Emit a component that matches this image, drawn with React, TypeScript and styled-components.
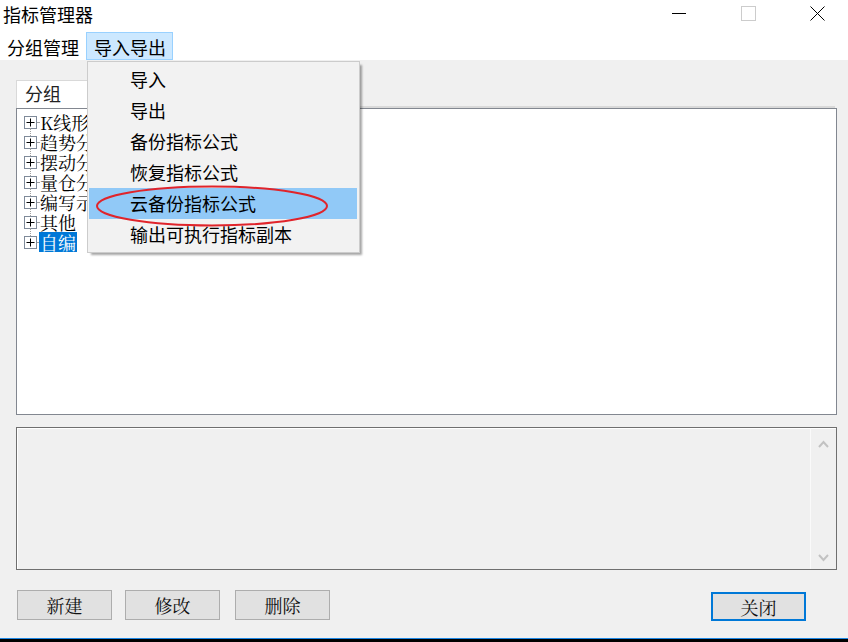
import React from "react";
import styled, { createGlobalStyle } from "styled-components";

const Global = createGlobalStyle`
  html, body { margin: 0; padding: 0; background: #f0f0f0; }
  body { font-family: "Noto Sans CJK SC", "Noto Sans", sans-serif; }
  * { box-sizing: border-box; }
`;

const SANS = `"Noto Sans CJK SC", "Noto Sans", sans-serif`;
const SERIF = `"Noto Serif CJK SC", "Liberation Serif", "Noto Sans CJK SC", serif`;

const Window = styled.div`
  position: relative;
  width: 848px;
  height: 642px;
  display: flex;
  flex-direction: column;
  overflow: hidden;
  background: #f0f0f0;
`;

const TitleBar = styled.div`
  height: 30px;
  background: #fff;
  display: flex;
  align-items: flex-start;
  justify-content: space-between;
`;

const Title = styled.div`
  font-family: ${SANS};
  font-size: 18px;
  line-height: 28px;
  padding-left: 3px;
  color: #000;
`;

const Captions = styled.div`
  display: flex;
  align-items: flex-start;
  gap: 54px;
  padding: 6px 23px 0 0;
`;

const CaptionGlyph = styled.svg`
  display: block;
  width: 15px;
  height: 15px;
`;

const MenuBar = styled.div`
  height: 30px;
  background: #fff;
  display: flex;
  align-items: flex-end;
`;

const MenuTitle = styled.div<{ $active?: boolean }>`
  height: 28px;
  padding: 0 6px 0 7px;
  font-family: ${SANS};
  font-size: 18px;
  line-height: 28px;
  color: #000;
  border: 1px solid ${(p) => (p.$active ? "#99d1ff" : "transparent")};
  background: ${(p) => (p.$active ? "#cce8ff" : "transparent")};
  margin-left: ${(p) => (p.$active ? "0" : "-1px")};
`;

const Body = styled.div`
  flex: 1;
  display: flex;
  flex-direction: column;
  padding: 20px 11px 0 16px;
`;

const TabStrip = styled.div`
  height: 28px;
  display: flex;
  align-items: flex-end;
  border-bottom: 2px solid #d9d9d9;
  margin-right: 2px;
`;

const Tab = styled.div`
  width: 78px;
  height: 28px;
  margin-bottom: -2px;
  background: #fff;
  border: 1px solid #d9d9d9;
  border-bottom: none;
  font-family: ${SANS};
  font-size: 18px;
  line-height: 24px;
  padding-left: 8px;
  color: #222;
`;

const TreeBox = styled.div`
  height: 307px;
  background: #fff;
  border: 1px solid #828790;
  padding: 3px 0 0 7px;
  display: flex;
  flex-direction: column;
`;

const TreeRow = styled.div<{ $last?: boolean }>`
  position: relative;
  height: 20px;
  display: flex;
  align-items: center;
  &::before {
    content: "";
    position: absolute;
    left: 6px;
    top: 16px;
    height: 8px;
    border-left: 1px dotted #a0a0a0;
    display: ${(p) => (p.$last ? "none" : "block")};
  }
`;

const PlusBox = styled.svg`
  display: block;
  width: 13px;
  height: 13px;
  flex: none;
`;

const Connector = styled.span`
  width: 2px;
  border-top: 1px dotted #a0a0a0;
`;

const TreeLabel = styled.span<{ $selected?: boolean }>`
  display: block;
  font-family: ${SERIF};
  font-size: 18px;
  line-height: 20px;
  height: 20px;
  padding: 0 1px;
  white-space: nowrap;
  color: ${(p) => (p.$selected ? "#fff" : "#000")};
  background: ${(p) => (p.$selected ? "#0078d7" : "transparent")};
`;

const InfoBox = styled.div`
  margin-top: 12px;
  height: 143px;
  border: 1px solid #6f6f6f;
  display: flex;
`;

const InfoText = styled.div`
  flex: 1;
  border-top: 1px solid #fff;
  border-left: 1px solid #fff;
  background: #f0f0f0;
`;

const ScrollBar = styled.div`
  width: 26px;
  border-left: 1px solid #fafafa;
  border-top: 1px solid #fff;
  display: flex;
  flex-direction: column;
  justify-content: space-between;
  align-items: center;
  padding: 11px 0 7px;
`;

const Chevron = styled.svg`
  display: block;
  width: 11px;
  height: 8px;
`;

const ButtonRow = styled.div`
  margin-top: 20px;
  display: flex;
  align-items: flex-start;
  padding-left: 1px;
  padding-right: 31px;
`;

const Button = styled.div<{ $default?: boolean; $gap?: number }>`
  width: 95px;
  height: ${(p) => (p.$default ? "29px" : "30px")};
  margin-left: ${(p) => p.$gap ?? 0}px;
  margin-top: ${(p) => (p.$default ? "2px" : "0")};
  background: #e1e1e1;
  border: ${(p) => (p.$default ? "2px solid #0078d7" : "1px solid #adadad")};
  display: flex;
  align-items: center;
  justify-content: center;
  font-family: ${SERIF};
  font-size: 18px;
  color: #111;
`;

const Spacer = styled.div`
  flex: 1;
`;

const BottomEdge = styled.div`
  height: 4px;
  background: #000;
  border-top: 1px solid #1e88e5;
`;

const Dropdown = styled.div`
  position: absolute;
  left: 87px;
  top: 61px;
  width: 273px;
  height: 192px;
  background: #f2f2f2;
  border: 1px solid #cccccc;
  padding: 2px 2px 2px 1px;
  box-shadow: 3px 3px 2px -1px rgba(0, 0, 0, 0.35);
  display: flex;
  flex-direction: column;
`;

const DropItem = styled.div<{ $hover?: boolean }>`
  height: 31px;
  padding-left: 41px;
  font-family: ${SANS};
  font-size: 18px;
  line-height: 30px;
  color: #000;
  background: ${(p) => (p.$hover ? "#91c9f7" : "transparent")};
  white-space: nowrap;
`;

const Highlight = styled.svg`
  position: absolute;
  left: 92px;
  top: 184px;
  width: 240px;
  height: 46px;
  pointer-events: none;
`;

const groups = ["K线形态", "趋势分析", "摆动分析", "量仓分析", "编写示范", "其他", "自编"];
const menuItems = ["导入", "导出", "备份指标公式", "恢复指标公式", "云备份指标公式", "输出可执行指标副本"];

export default function App() {
  return (
    <>
      <Global />
      <Window>
        <TitleBar>
          <Title>指标管理器</Title>
          <Captions>
            <CaptionGlyph viewBox="0 0 15 15">
              <line x1="0" y1="7.5" x2="14" y2="7.5" stroke="#000" strokeWidth="1" />
            </CaptionGlyph>
            <CaptionGlyph viewBox="0 0 15 15">
              <rect x="0.5" y="0.5" width="14" height="14" fill="none" stroke="#cccccc" strokeWidth="1" />
            </CaptionGlyph>
            <CaptionGlyph viewBox="0 0 15 15">
              <line x1="0.5" y1="0.5" x2="14.5" y2="14.5" stroke="#000" strokeWidth="1" />
              <line x1="14.5" y1="0.5" x2="0.5" y2="14.5" stroke="#000" strokeWidth="1" />
            </CaptionGlyph>
          </Captions>
        </TitleBar>
        <MenuBar>
          <MenuTitle>分组管理</MenuTitle>
          <MenuTitle $active>导入导出</MenuTitle>
        </MenuBar>
        <Body>
          <TabStrip>
            <Tab>分组</Tab>
          </TabStrip>
          <TreeBox>
            {groups.map((g, i) => (
              <TreeRow key={g} $last={i === groups.length - 1}>
                <PlusBox viewBox="0 0 13 13">
                  <rect x="0.5" y="0.5" width="12" height="12" fill="#fff" stroke="#7f8a99" />
                  <line x1="2.5" y1="6.5" x2="10.5" y2="6.5" stroke="#000" />
                  <line x1="6.5" y1="2.5" x2="6.5" y2="10.5" stroke="#000" />
                </PlusBox>
                <Connector />
                <TreeLabel $selected={g === "自编"}>{g}</TreeLabel>
              </TreeRow>
            ))}
          </TreeBox>
          <InfoBox>
            <InfoText />
            <ScrollBar>
              <Chevron viewBox="0 0 11 8">
                <polyline points="1,7 5.5,2 10,7" fill="none" stroke="#c2c2c2" strokeWidth="2" />
              </Chevron>
              <Chevron viewBox="0 0 11 8">
                <polyline points="1,1 5.5,6 10,1" fill="none" stroke="#c2c2c2" strokeWidth="2" />
              </Chevron>
            </ScrollBar>
          </InfoBox>
          <ButtonRow>
            <Button>新建</Button>
            <Button $gap={13}>修改</Button>
            <Button $gap={15}>删除</Button>
            <Spacer />
            <Button $default>关闭</Button>
          </ButtonRow>
        </Body>
        <BottomEdge />
        <Dropdown>
          {menuItems.map((m) => (
            <DropItem key={m} $hover={m === "云备份指标公式"}>
              {m}
            </DropItem>
          ))}
        </Dropdown>
        <Highlight viewBox="0 0 240 46">
          <ellipse cx="120" cy="22" rx="115" ry="19.5" fill="none" stroke="#e0242b" strokeWidth="2" />
        </Highlight>
      </Window>
    </>
  );
}
